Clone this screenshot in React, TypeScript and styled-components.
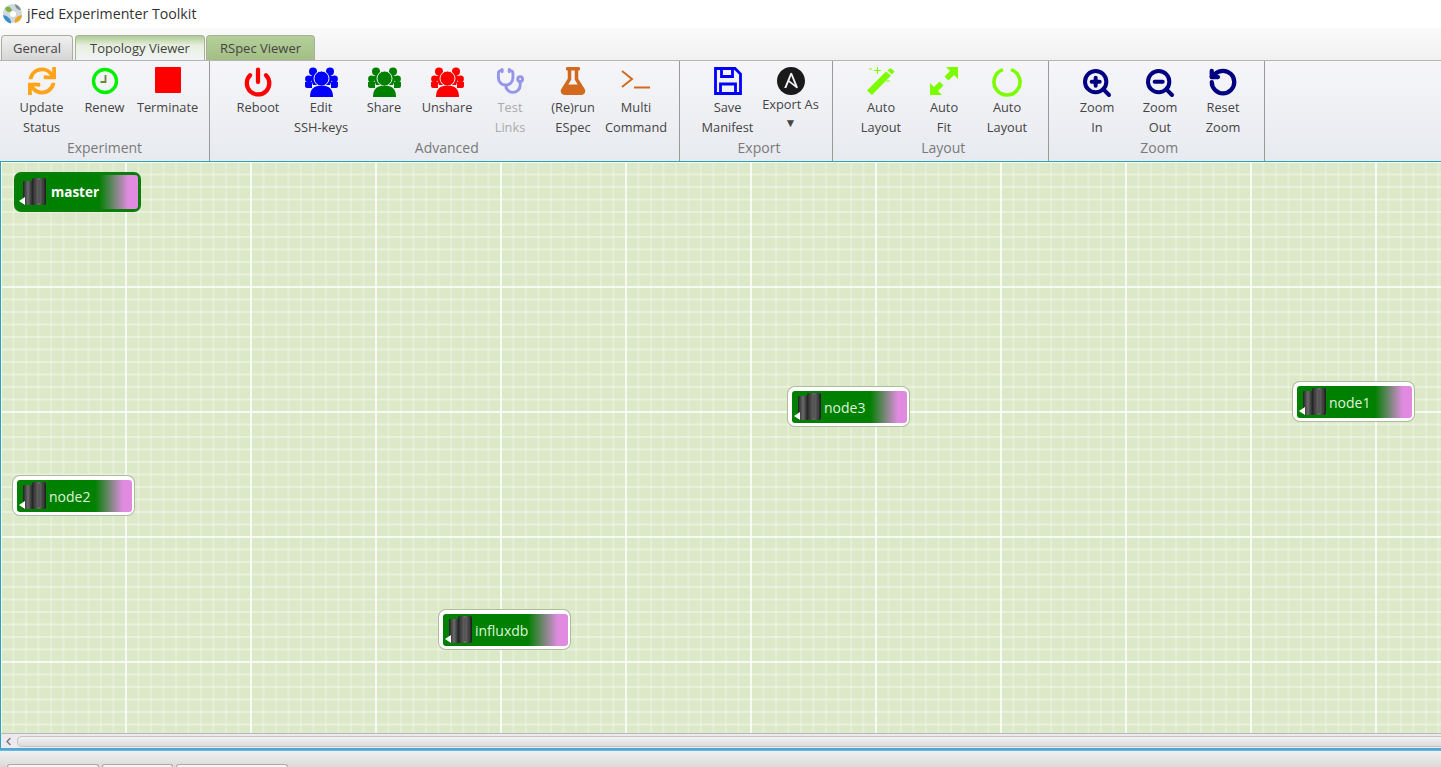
import React from "react";
import styled, { createGlobalStyle } from "styled-components";
import { FaSync, FaFlask, FaChevronLeft } from "react-icons/fa";
import { SiAnsible } from "react-icons/si";
import { Power, Stethoscope, ZoomIn, ZoomOut, RotateCcw } from "lucide-react";

const Global = createGlobalStyle`
  html, body { margin: 0; padding: 0; overflow: hidden; background: #e6e6e6; }
  * { box-sizing: border-box; }
`;

const Page = styled.div`
  width: 1441px;
  height: 767px;
  display: flex;
  flex-direction: column;
  overflow: hidden;
  font-family: "Open Sans", "Noto Sans", sans-serif;
  color: #444;
`;

const TitleBar = styled.div`
  height: 28px;
  flex: none;
  background: #fff;
  display: flex;
  align-items: center;
  gap: 4px;
  padding: 0 0 1px 2px;
  font-size: 14.2px;
  color: #333;
`;

const TabRow = styled.div`
  height: 33px;
  flex: none;
  display: flex;
  align-items: flex-end;
  gap: 2px;
  padding-left: 1px;
  background: linear-gradient(#fafafa, #f1f1f1);
  border-bottom: 1px solid #b5b5b5;
`;

const Tab = styled.div<{ $kind: "plain" | "active" | "green" }>`
  width: ${(p) => (p.$kind === "plain" ? 72 : p.$kind === "active" ? 130 : 109)}px;
  margin-right: ${(p) => (p.$kind === "active" ? -1 : 0)}px;
  height: 25px;
  border: 1px solid #a8b09c;
  border-bottom: none;
  border-radius: 4px 4px 0 0;
  display: flex;
  align-items: center;
  justify-content: center;
  font-size: 13px;
  color: #444;
  background: ${(p) =>
    p.$kind === "plain"
      ? "linear-gradient(#f0f0f0, #d6d6d6)"
      : p.$kind === "active"
      ? "linear-gradient(#aecb94, #e8efdf 40%, #f2f4f6)"
      : "linear-gradient(#b4cf9a, #a3bf85)"};
`;

const Ribbon = styled.div`
  height: 100px;
  flex: none;
  display: flex;
  background: linear-gradient(#f6f6f9, #e7eaef);
`;

const Group = styled.section<{ $width: number; $left: number }>`
  width: ${(p) => p.$width}px;
  padding-left: ${(p) => p.$left}px;
  border-right: 1px solid #9a9a9a;
  display: flex;
  flex-direction: column;
`;

const Buttons = styled.div`
  height: 75px;
  display: flex;
`;

const GroupLabel = styled.div<{ $offset: number }>`
  height: 24px;
  font-size: 14px;
  line-height: 24px;
  color: #7a7a7a;
  text-align: center;
  margin-left: ${(p) => -p.$offset}px;
`;

const ToolButton = styled.div<{ $muted?: boolean }>`
  width: 63px;
  display: flex;
  flex-direction: column;
  align-items: center;
  font-size: 12.8px;
  line-height: 20px;
  color: ${(p) => (p.$muted ? "#aaa" : "#444")};
  white-space: nowrap;
`;

const IconBox = styled.div<{ $color: string; $h?: number }>`
  height: ${(p) => p.$h ?? 36}px;
  flex: none;
  padding-top: 6px;
  display: flex;
  align-items: flex-start;
  justify-content: center;
  color: ${(p) => p.$color};
`;

const Arrow = styled.div`
  font-size: 12px;
  line-height: 17px;
  color: #444;
`;

const Canvas = styled.div`
  position: relative;
  flex: 1;
  min-height: 0;
  border-top: 1px solid #2aa3b5;
  border-left: 1px solid #2aa3b5;
  background-color: #dce9c8;
  background-image:
    linear-gradient(to right, rgba(255,255,255,.72) 2px, transparent 2px),
    linear-gradient(to bottom, rgba(255,255,255,.62) 2px, transparent 2px),
    linear-gradient(to right, rgba(255,255,255,.24) 2px, transparent 2px),
    linear-gradient(to bottom, rgba(255,255,255,.34) 2px, transparent 2px);
  background-size: 125px 125px, 125px 125px, 12.5px 12.5px, 12.5px 12.5px;
  background-position: -1px -1px, -1px -1px, -1px -1px, -1px -1px;
`;

const Node = styled.div<{ $x: number; $y: number; $w: number; $selected?: boolean }>`
  position: absolute;
  left: ${(p) => p.$x}px;
  top: ${(p) => p.$y}px;
  width: ${(p) => p.$w}px;
  height: ${(p) => (p.$selected ? 40 : 39)}px;
  border-radius: 7px;
  padding: ${(p) => (p.$selected ? "3px" : "4px 2px 3px 4px")};
  background: ${(p) => (p.$selected ? "#0a7d0a" : "#fff")};
  box-shadow: ${(p) => (p.$selected ? "none" : "0 0 0 1px #aebb9c")};
`;

const NodeInner = styled.div<{ $selected?: boolean }>`
  height: 100%;
  border-radius: 3px;
  display: flex;
  align-items: center;
  gap: ${(p) => (p.$selected ? 3 : 1)}px;
  padding-left: 2px;
  background: linear-gradient(to right, #008000 0, #008000 68%, #e08be0 92%);
  font-size: ${(p) => (p.$selected ? 13.5 : 14)}px;
  font-weight: ${(p) => (p.$selected ? 700 : 400)};
  color: ${(p) => (p.$selected ? "#fff" : "#dff5dc")};
`;

const HScroll = styled.div`
  height: 15px;
  flex: none;
  background: #eceaee;
  border-top: 1px solid #b8b8b8;
  border-left: 1px solid #2aa3b5;
  display: flex;
  align-items: center;
  padding: 0 0 0 3px;
  gap: 4px;
  color: #777;
`;

const Thumb = styled.div`
  flex: 1;
  height: 11px;
  border: 1px solid #c4c4c4;
  border-right: none;
  border-radius: 5px 0 0 5px;
  background: linear-gradient(#f2f2f2, #dcdcdc);
`;

const BlueLine = styled.div`
  height: 3px;
  flex: none;
  background: linear-gradient(#8a9aa5, #37a7dd 40%, #6fc3ea);
`;

const BottomBar = styled.div`
  height: 16px;
  flex: none;
  display: flex;
  align-items: flex-end;
  padding-left: 7px;
  gap: 3px;
  background: linear-gradient(#f1f1f1, #dadada);
`;

const BottomTab = styled.div<{ $w: number }>`
  width: ${(p) => p.$w}px;
  height: 3px;
  background: #f6f6f6;
  border: 1px solid #aaa;
  border-bottom: none;
  border-radius: 3px 3px 0 0;
`;

const Logo = () => (
  <svg width="21" height="21" viewBox="0 0 21 21">
    <circle cx="10.5" cy="10.5" r="9.5" fill="#cfd8dc" />
    <path d="M1 12a9.500 9.500 0 0 0 8 8.500c1-3-3-8-8-8.500z" fill="#3c8fc9" />
    <path d="M13 1a9.500 9.500 0 0 1 6 6c-3 0-6-2-6-6z" fill="#7d8d92" />
    <path d="M3 5c3-2 6-2 7 3-3 2-6 1-7-3z" fill="#7fb33c" />
    <path d="M13 20c-1-4 1-7 7-8 0 4-3 7-7 8z" fill="#e8a82c" />
    <circle cx="11" cy="11" r="3" fill="#fff" />
  </svg>
);

const Clock = () => (
  <svg width="28" height="28" viewBox="0 0 28 28" fill="none">
    <circle cx="14" cy="14" r="11.5" stroke="#00f000" strokeWidth="3.4" />
    <path d="M14.5 8v7H9.5" stroke="#6a8a2c" strokeWidth="1.8" />
  </svg>
);

const StopSquare = () => (
  <svg width="26" height="26" viewBox="0 0 26 26"><rect width="26" height="26" rx="1" fill="#f00" /></svg>
);

const People = () => (
  <svg width="33" height="30" viewBox="0 0 33 30" fill="currentColor">
    <circle cx="8" cy="4.5" r="4" />
    <circle cx="25" cy="4.5" r="4" />
    <circle cx="3.5" cy="12" r="3.4" />
    <circle cx="29.500" cy="12" r="3.400" />
    <path d="M0 15h7v6H2a2 2 0 0 1-2-2zM33 15h-7v6h5a2 2 0 0 0 2-2z" />
    <path d="M5 10l4-3h15l4 3-3 8H8z" />
    <circle cx="16.500" cy="11.500" r="7.500" stroke="#f1f2f5" strokeWidth="1" />
    <path d="M5 30c0-8 4-11.500 11.500-11.500S28 22 28 30z" />
  </svg>
);

const Prompt = () => (
  <svg width="30" height="24" viewBox="0 0 30 24" fill="none" stroke="#d2691e" strokeWidth="2">
    <path d="M1 4l10 8-10 8" />
    <path d="M13 20.500h16" />
  </svg>
);

const Floppy = () => (
  <svg width="28" height="28" viewBox="0 0 28 28" fill="none" stroke="#0000ff" strokeWidth="2.800">
    <path d="M1.500 1.500h19.500l5.500 5.500v19.500h-25z" />
    <path d="M7.500 1.500v8h11v-8" />
    <path d="M6.500 26.500v-9.500h15v9.500" />
  </svg>
);

const Wand = () => (
  <svg width="30" height="28" viewBox="0 0 30 28" fill="#7cfc00">
    <path d="M1 23.500 20 4.500l5 4-19 19.500z" />
    <path d="M21.500 3.500l3-2.500 4 3.500-2.500 3z" />
    <path d="M8 3.500h7M11.500 0v7M3 2h3M20 14h4" stroke="#7cfc00" strokeWidth="1" />
  </svg>
);

const ExpandArrow = () => (
  <svg width="28" height="28" viewBox="0 0 28 28" fill="#7cfc00">
    <path d="M16 0h12v12l-4-4-5.500 5.500-4-4L20 4zM12 28H0V16l4 4 5.500-5.500 4 4L8 24z" />
  </svg>
);

const Ring = () => (
  <svg width="30" height="30" viewBox="0 0 30 30" fill="none">
    <path d="M19 2.600A13 13 0 1 1 11 2.600" stroke="#7cfc00" strokeWidth="3.600" />
  </svg>
);

const Server = () => (
  <svg width="29" height="30" viewBox="0 0 29 30" style={{ flex: "none" }}>
    <defs>
      <linearGradient id="srv" x1="0" x2="1" y1="0" y2="0">
        <stop offset="0" stopColor="#222" />
        <stop offset=".5" stopColor="#6b6b6b" />
        <stop offset="1" stopColor="#1c1c1c" />
      </linearGradient>
    </defs>
    <rect x="4" y="4" width="10" height="24" rx="1" fill="url(#srv)" />
    <rect x="13" y="1" width="14" height="27" rx="2" fill="url(#srv)" />
    <path d="M16 3v23M20 3v23M24 3v23" stroke="#444" strokeWidth="1" />
    <path d="M0 24l6-4v8z" fill="#fff" />
  </svg>
);

type Btn = { lines: string[]; icon: React.ReactNode; color: string; muted?: boolean };
const P = <People />;

const groups: { label: string; width: number; left: number; offset: number; buttons: Btn[] }[] = [
  {
    label: "Experiment", width: 210, left: 10, offset: 10,
    buttons: [
      { lines: ["Update", "Status"], icon: <FaSync size={28} />, color: "#ffa31a" },
      { lines: ["Renew"], icon: <Clock />, color: "#0f0" },
      { lines: ["Terminate"], icon: <StopSquare />, color: "#f00" },
    ],
  },
  {
    label: "Advanced", width: 470, left: 16.5, offset: 12,
    buttons: [
      { lines: ["Reboot"], icon: <Power size={30} strokeWidth={3.4} />, color: "#f00" },
      { lines: ["Edit", "SSH-keys"], icon: P, color: "#0000ff" },
      { lines: ["Share"], icon: P, color: "#008000" },
      { lines: ["Unshare"], icon: P, color: "#ff0000" },
      { lines: ["Test", "Links"], icon: <Stethoscope size={29} strokeWidth={2.4} />, color: "#9595ea", muted: true },
      { lines: ["(Re)run", "ESpec"], icon: <FaFlask size={28} />, color: "#d2691e" },
      { lines: ["Multi", "Command"], icon: <Prompt />, color: "#d2691e" },
    ],
  },
  {
    label: "Export", width: 153, left: 16, offset: 10,
    buttons: [
      { lines: ["Save", "Manifest"], icon: <Floppy />, color: "#0000ff" },
    ],
  },
  {
    label: "Layout", width: 216, left: 16.5, offset: 11,
    buttons: [
      { lines: ["Auto", "Layout"], icon: <Wand />, color: "#7cfc00" },
      { lines: ["Auto", "Fit"], icon: <ExpandArrow />, color: "#7cfc00" },
      { lines: ["Auto", "Layout"], icon: <Ring />, color: "#7cfc00" },
    ],
  },
  {
    label: "Zoom", width: 216, left: 16.5, offset: 11,
    buttons: [
      { lines: ["Zoom", "In"], icon: <ZoomIn size={32} strokeWidth={3} />, color: "#000080" },
      { lines: ["Zoom", "Out"], icon: <ZoomOut size={32} strokeWidth={3} />, color: "#000080" },
      { lines: ["Reset", "Zoom"], icon: <RotateCcw size={30} strokeWidth={3.4} />, color: "#000080" },
    ],
  },
];

const nodes = [
  { name: "master", x: 13, y: 10, w: 127, selected: true },
  { name: "node3", x: 787, y: 225, w: 121 },
  { name: "node1", x: 1292, y: 220, w: 121 },
  { name: "node2", x: 12, y: 314, w: 121 },
  { name: "influxdb", x: 438, y: 448, w: 131 },
];

export default function App() {
  return (
    <Page>
      <Global />
      <TitleBar>
        <Logo />
        jFed Experimenter Toolkit
      </TitleBar>
      <TabRow>
        <Tab $kind="plain">General</Tab>
        <Tab $kind="active">Topology Viewer</Tab>
        <Tab $kind="green">RSpec Viewer</Tab>
      </TabRow>
      <Ribbon>
        {groups.map((g) => (
          <Group key={g.label} $width={g.width} $left={g.left}>
            <Buttons>
              {g.buttons.map((b, i) => (
                <ToolButton key={i} $muted={b.muted}>
                  <IconBox $color={b.color}>{b.icon}</IconBox>
                  {b.lines.map((l) => (
                    <div key={l}>{l}</div>
                  ))}
                </ToolButton>
              ))}
              {g.label === "Export" && (
                <ToolButton>
                  <IconBox $color="#1a1a1a" $h={33}>
                    <SiAnsible size={28} />
                  </IconBox>
                  <div>Export As</div>
                  <Arrow>▼</Arrow>
                </ToolButton>
              )}
            </Buttons>
            <GroupLabel $offset={g.offset}>{g.label}</GroupLabel>
          </Group>
        ))}
      </Ribbon>
      <Canvas>
        {nodes.map((n) => (
          <Node key={n.name} $x={n.x} $y={n.y} $w={n.w} $selected={n.selected}>
            <NodeInner $selected={n.selected}>
              <Server />
              {n.name}
            </NodeInner>
          </Node>
        ))}
      </Canvas>
      <HScroll>
        <FaChevronLeft size={9} />
        <Thumb />
      </HScroll>
      <BlueLine />
      <BottomBar>
        <BottomTab $w={92} />
        <BottomTab $w={71} />
        <BottomTab $w={112} />
      </BottomBar>
    </Page>
  );
}
